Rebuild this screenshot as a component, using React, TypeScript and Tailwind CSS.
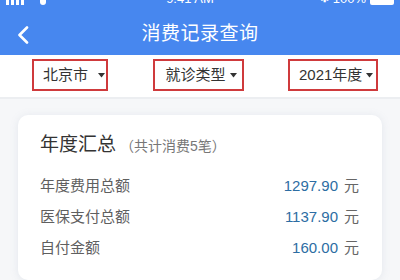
import React from 'react';

const FONT = { fontFamily: '"Liberation Sans", "Noto Sans CJK SC", sans-serif' };

const Caret = () => (
  <svg width="7" height="5" viewBox="0 0 7 5" className="shrink-0">
    <path d="M0 0 L7 0 L3.5 4.5 Z" fill="#333" />
  </svg>
);

const FilterBox = ({ label, width, pad, gap }: { label: string; width: string; pad: string; gap: string }) => (
  <div className={`${width} ${pad} ${gap} h-[32px] border-2 border-[#cf3a3c] flex items-center text-[15px] text-[#333]`}>
    <span>{label}</span>
    <Caret />
  </div>
);

const rows = [
  { label: '年度费用总额', value: '1297.90' },
  { label: '医保支付总额', value: '1137.90' },
  { label: '自付金额', value: '160.00' },
];

export default function App() {
  return (
    <div className="w-[400px] h-[280px] overflow-hidden bg-[#f6f7f9]" style={FONT}>
      {/* header */}
      <div className="bg-[#4787ef] h-[55px] text-white">
        <div className="h-[6px] overflow-hidden">
          <div className="-mt-[9px] h-[15px] flex items-center justify-between px-[6px] text-[13px] font-bold">
            <div className="flex items-end gap-[2px] w-[60px]">
              <span className="w-[3px] h-[10px] bg-white" />
              <span className="w-[3px] h-[11px] bg-white" />
              <span className="w-[3px] h-[12px] bg-white" />
              <span className="w-[3px] h-[13px] bg-white" />
              <span className="ml-[14px] w-[6px] h-[13px] rounded-full bg-white" />
            </div>
            <span className="font-normal">9:41 AM</span>
            <div className="flex items-center gap-[4px] w-[80px] justify-end">
              <span className="text-[11px]">✱</span>
              <span className="font-normal">100%</span>
              <span className="w-[24px] h-[12px] bg-white rounded-[2px]" />
            </div>
          </div>
        </div>
        <div className="relative h-[49px] flex items-center justify-center">
          <svg className="absolute left-[17px] top-[20px]" width="12" height="18" viewBox="0 0 12 18">
            <path d="M10 1.5 L2.5 9 L10 16.5" stroke="white" strokeWidth="2.6" fill="none" strokeLinecap="round" strokeLinejoin="round" />
          </svg>
          <span className="mt-[7px] text-[19px] tracking-[0.5px]">消费记录查询</span>
        </div>
      </div>

      {/* filters */}
      <div className="bg-white h-[44px] border-b-2 border-[#eceef1] flex items-start justify-between pl-[32px] pr-[22px] pt-[4px]">
        <FilterBox label="北京市" width="w-[76px]" pad="pl-[9px]" gap="gap-[10px]" />
        <FilterBox label="就诊类型" width="w-[91px]" pad="pl-[11px]" gap="gap-[4px]" />
        <FilterBox label="2021年度" width="w-[90px]" pad="pl-[9px]" gap="gap-[4px]" />
      </div>

      {/* summary card */}
      <div className="mx-[18px] mt-[16px] bg-white rounded-[10px] shadow-[0_1px_8px_rgba(120,140,170,0.15)] pl-[22px] pr-[23px] pt-[16px] pb-[16px]">
        <div className="flex items-baseline leading-[28px]">
          <span className="text-[19px] text-[#333]">年度汇总</span>
          <span className="ml-[4px] text-[14px] text-[#777]">（共计消费5笔）</span>
        </div>
        <div className="mt-[11px]">
          {rows.map((r) => (
            <div key={r.label} className="h-[31px] flex items-center justify-between text-[15px]">
              <span className="text-[#5f5f5f]">{r.label}</span>
              <span className="text-[#2d6da3]">
                {r.value}
                <span className="ml-[6px] text-[#666]">元</span>
              </span>
            </div>
          ))}
        </div>
      </div>
    </div>
  );
}
